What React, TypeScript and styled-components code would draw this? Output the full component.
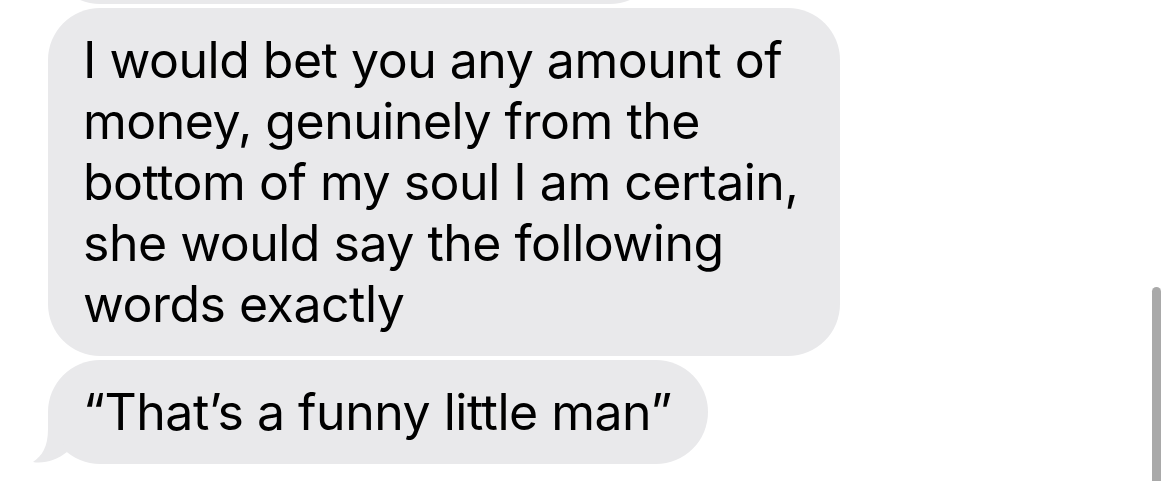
import styled, { createGlobalStyle } from 'styled-components';

const GlobalStyle = createGlobalStyle`
  html, body {
    margin: 0;
    padding: 0;
    background: #ffffff;
    overflow: hidden;
  }
`

const Screen = styled.div`
  position: relative;
  width: 1170px;
  height: 481px;
  overflow: hidden;
  background: #ffffff;
  font-family: Inter, "Noto Sans", "Liberation Sans", sans-serif;
`

// the list is scrolled so the previous bubble is mostly above the top edge
const Thread = styled.div`
  display: flex;
  flex-direction: column;
  align-items: flex-start;
  gap: 4px;
  margin-top: -100px;
  padding-left: 48px;
`

const Bubble = styled.div<{ $width?: number; $height?: number }>`
  position: relative;
  box-sizing: border-box;
  background: #e9e9eb;
  border-radius: 52px;
  padding: 22px 0 21px 35px;
  color: #000000;
  font-size: 50px;
  line-height: 61px;
  letter-spacing: -0.5px;
  white-space: nowrap;
  ${({ $width }) => $width && `width: ${$width}px;`}
  ${({ $height }) => $height && `height: ${$height}px;`}
`

const Tail = styled.svg`
  position: absolute;
  left: -16px;
  bottom: 0;
  width: 36px;
  height: 52px;
  fill: #e9e9eb;
`

const ScrollThumb = styled.div`
  position: absolute;
  left: 1152px;
  top: 287px;
  width: 9px;
  height: 220px;
  border-radius: 5px;
  background: #a9a9a9;
`

const message = [
  'I would bet you any amount of',
  'money, genuinely from the',
  'bottom of my soul I am certain,',
  'she would say the following',
  'words exactly',
]

function App() {
  return (
    <Screen>
      <GlobalStyle />
      <Thread>
        <Bubble $width={614} $height={104} />
        <Bubble $width={792}>
          {message.map((line, i) => (
            <div key={i}>{line}</div>
          ))}
        </Bubble>
        <Bubble $width={660}>
          “That’s a funny little man”
          <Tail viewBox="0 0 36 52">
            <path d="M16 0 L16 17 C16 35 10 44 1 50 C12 52 25 48 35 40 Z" />
          </Tail>
        </Bubble>
      </Thread>
      <ScrollThumb />
    </Screen>
  )
}

export default App
